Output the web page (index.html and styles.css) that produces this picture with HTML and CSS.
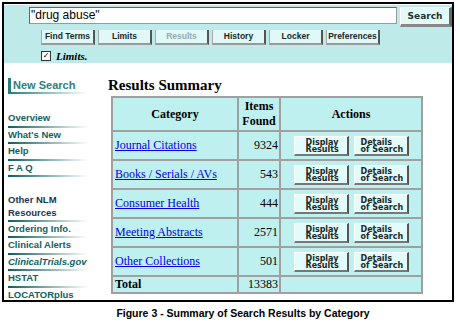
FILE: index.html
```html
<!DOCTYPE html>
<html lang="en">
<head>
	<meta charset="UTF-8">
	<title>Results Summary</title>
	<link rel="stylesheet" href="styles.css">
</head>
<body>
	<div class="frame">
		<div class="topbar">
			<div class="search-row">
				<div class="search-input">"drug abuse"</div>
				<a href="#" class="btn-search">Search</a>
			</div>
			<ul class="tabs">
				<li class="tab"><a href="#">Find Terms</a></li>
				<li class="tab"><a href="#">Limits</a></li>
				<li class="tab off"><a href="#">Results</a></li>
				<li class="tab"><a href="#">History</a></li>
				<li class="tab"><a href="#">Locker</a></li>
				<li class="tab"><a href="#">Preferences</a></li>
			</ul>
			<div class="limits-row">
				<span class="check">&#10003;</span>
				<span class="limits-label">Limits.</span>
			</div>
		</div>

		<div class="main">
			<div class="nav">
				<a href="#" class="new-search">New Search</a>
				<ul class="nav-list">
					<li class="nav-item"><a href="#">Overview</a></li>
					<li class="nav-item"><a href="#">What's New</a></li>
					<li class="nav-item"><a href="#">Help</a></li>
					<li class="nav-item"><a href="#">F A Q</a></li>
				</ul>
				<ul class="nav-list other">
					<li class="nav-item nav-head">Other NLM<br>Resources</li>
					<li class="nav-item"><a href="#">Ordering Info.</a></li>
					<li class="nav-item"><a href="#">Clinical Alerts</a></li>
					<li class="nav-item"><a href="#"><i>ClinicalTrials.gov</i></a></li>
					<li class="nav-item"><a href="#">HSTAT</a></li>
					<li class="nav-item"><a href="#">LOCATORplus</a></li>
				</ul>
			</div>

			<div class="content">
				<h1 class="title">Results Summary</h1>
				<table class="summary">
					<tr class="head">
						<th class="col-cat">Category</th>
						<th class="col-num">Items<br>Found</th>
						<th class="col-act">Actions</th>
					</tr>
					<tr>
						<td><a href="#">Journal Citations</a></td>
						<td class="num">9324</td>
						<td class="act"><a href="#" class="btn-act">Display<br>Results</a><a href="#" class="btn-act">Details<br>of Search</a></td>
					</tr>
					<tr>
						<td><a href="#">Books / Serials / AVs</a></td>
						<td class="num">543</td>
						<td class="act"><a href="#" class="btn-act">Display<br>Results</a><a href="#" class="btn-act">Details<br>of Search</a></td>
					</tr>
					<tr>
						<td><a href="#">Consumer Health</a></td>
						<td class="num">444</td>
						<td class="act"><a href="#" class="btn-act">Display<br>Results</a><a href="#" class="btn-act">Details<br>of Search</a></td>
					</tr>
					<tr>
						<td><a href="#">Meeting Abstracts</a></td>
						<td class="num">2571</td>
						<td class="act"><a href="#" class="btn-act">Display<br>Results</a><a href="#" class="btn-act">Details<br>of Search</a></td>
					</tr>
					<tr>
						<td><a href="#">Other Collections</a></td>
						<td class="num">501</td>
						<td class="act"><a href="#" class="btn-act">Display<br>Results</a><a href="#" class="btn-act">Details<br>of Search</a></td>
					</tr>
					<tr class="total">
						<td><b>Total</b></td>
						<td class="num">13383</td>
						<td></td>
					</tr>
				</table>
			</div>
		</div>
	</div>
	<p class="caption">Figure 3 - Summary of Search Results by Category</p>
</body>
</html>
```

FILE: styles.css
```css
body{margin: 0; background: #fff; font-family: "Liberation Sans", Arial, sans-serif;}
ul{list-style: none; padding: 0; margin: 0;}
a{text-decoration: none;}

.frame{
	margin: 2px 0 0 2px; width: 448px; height: 296px;
	border: 2px solid #000; overflow: hidden;
}

/* top search band */
.topbar{
	background: #bfeaea; height: 58px; margin-top: 1px; padding: 2px 0 0 25px; box-sizing: border-box;
}
.search-row{display: flex; align-items: flex-start; gap: 3px;}
.search-input{
	width: 368px; height: 17px; box-sizing: border-box; background: #fff;
	border: 1px solid #999; border-top-color: #666; border-left-color: #666;
	font-size: 12px; line-height: 15px; padding-left: 1px; color: #000;
}
.btn-search{
	display: block; width: 52px; height: 20px; box-sizing: border-box;
	background: #e2fafa; border-right: 3px solid #666; border-bottom: 3px solid #888;
	border-left: 1px solid #fff; border-top: 1px solid #fff;
	font: bold 9px/17px "DejaVu Sans", sans-serif; color: #1a3333; text-align: center;
}
.tabs{display: flex; gap: 3px; margin: 3px 0 0 12px;}
.tab a{
	display: block; width: 54px; height: 15px; box-sizing: border-box;
	background: #e0f8f8; border-right: 2px solid #555; border-bottom: 2px solid #999;
	border-left: 1px solid #aaa;
	font: bold 8.5px/13px "Liberation Sans", Arial, sans-serif; color: #1a2a2a; text-align: center;
}
.tab.off a{color: #9aa;}
.limits-row{display: flex; align-items: center; gap: 5px; margin: 5px 0 0 12px; height: 12px;}
.check{
	width: 8px; height: 8px; border: 1px solid #333; background: #fff;
	font: bold 8px/8px "DejaVu Sans", sans-serif; text-align: center; color: #000;
}
.limits-label{font: italic bold 11px "Liberation Serif", serif; color: #000;}

/* body area */
.main{display: flex;}
.nav{width: 100px; padding: 15px 0 0 4px; box-sizing: border-box;}
.new-search{
	display: block; width: 80px; height: 16px; box-sizing: border-box;
	border-left: 3px solid #2c7f7f; padding-left: 2px;
	background: linear-gradient(to right, #2c7f7f, #fff) no-repeat left bottom / 100% 2px;
	font: bold 11px/14px "Liberation Sans", Arial, sans-serif; color: #2c7f7f;
}
.nav-list{margin-top: 17px;}
.nav-list.other{margin-top: 16px;}
.nav-item{
	width: 80px; padding-bottom: 2.5px;
	background: linear-gradient(to right, #0d5f5f, #fff) no-repeat left bottom / 100% 2px;
	font: bold 9.5px/14px "Liberation Sans", Arial, sans-serif;
}
.nav-item a{color: #125f5f;}
.nav-head{color: #1a3559; line-height: 13px;}

.content{padding-left: 4px;}
.title{font: bold 15px/16px "Liberation Serif", serif; margin: 14px 0 3px 0; color: #000;}
.summary{
	border-collapse: collapse; width: 312px; margin-left: 3px;
	background: #bff0f0; border: 2px solid #a0a0a0;
	font: 12px "Liberation Serif", serif;
}
.summary th, .summary td{border: 2px solid #a0a0a0; padding: 0 2px;}
.summary th{font-weight: bold; height: 32px; line-height: 15px;}
.col-cat{width: 120px;}
.col-num{width: 36px;}
.summary td{height: 27px;}
.summary td a{color: #00e; text-decoration: underline;}
.summary .num{text-align: right; padding-right: 1px;}
.summary .total td{height: 15px; line-height: 13px;}
.act{text-align: center; font-size: 0;}
.btn-act{
	display: inline-block; width: 55px; height: 20px; box-sizing: border-box; vertical-align: middle;
	background: #e2fbfb; border-right: 2px solid #555; border-bottom: 2px solid #777;
	border-left: 1px solid #fff; border-top: 1px solid #fff;
	font: bold 8px/7.5px "DejaVu Sans", sans-serif; color: #1a2a2a; text-align: left;
	padding: 2px 0 0 11px;
}
.btn-act + .btn-act{margin-left: 5px; padding-left: 6px;}
.summary td a.btn-act{text-decoration: none; color: #1a2a2a;}

.caption{
	margin: 5px 0 0 0; padding-left: 26px; text-align: center;
	font: bold 10.5px "Liberation Sans", Arial, sans-serif; color: #000;
}
```
